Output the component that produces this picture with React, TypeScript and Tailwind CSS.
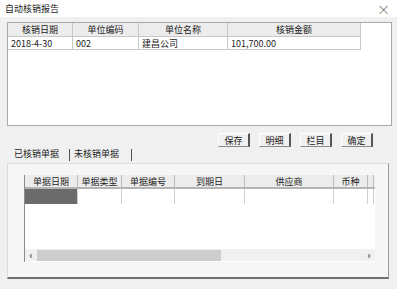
import React from 'react';

const font = { fontFamily: '"Noto Sans CJK SC", "Liberation Sans", sans-serif' };

const topCols = [
  { title: '核销日期', w: 'w-[65px]', value: '2018-4-30' },
  { title: '单位编码', w: 'w-[66px]', value: '002' },
  { title: '单位名称', w: 'w-[89px]', value: '建昌公司' },
  { title: '核销金额', w: 'w-[133px]', value: '101,700.00' },
];

const gridCols = [
  { title: '单据日期', w: 'w-[53px]' },
  { title: '单据类型', w: 'w-[44px]' },
  { title: '单据编号', w: 'w-[53px]' },
  { title: '到期日', w: 'w-[70px]' },
  { title: '供应商', w: 'w-[89px]' },
  { title: '币种', w: 'w-[34px]' },
  { title: '', w: 'w-[6px]' },
];

const buttons = ['保存', '明细', '栏目', '确定'];

export default function App() {
  return (
    <div
      className="w-[397px] h-[289px] overflow-hidden bg-[#f0f0f0] text-[9px] leading-none text-[#222] flex flex-col"
      style={font}
    >
      {/* title bar */}
      <div className="h-[17px] bg-white flex items-center justify-between pl-[5px] pr-[7px] shrink-0">
        <span>自动核销报告</span>
        <span className="text-[13px] font-light text-[#555]">×</span>
      </div>

      {/* upper result box */}
      <div className="ml-[7px] mt-[5px] w-[385px] h-[104px] bg-white border border-[#a9a9a9] shrink-0">
        <div className="flex h-[14px] w-[353px] bg-[#ececec] border-b border-[#c8c8c8]">
          {topCols.map((c) => (
            <div key={c.title} className={`${c.w} border-r border-[#c8c8c8] flex items-center justify-center`}>
              {c.title}
            </div>
          ))}
        </div>
        <div className="flex h-[13px] w-[353px] border-b border-[#c8c8c8]">
          {topCols.map((c) => (
            <div key={c.title} className={`${c.w} border-r border-[#c8c8c8] flex items-center pl-[3px]`}>
              {c.value}
            </div>
          ))}
        </div>
      </div>

      {/* buttons */}
      <div className="flex gap-[9px] pl-[218px] mt-[7px] h-[14px] shrink-0">
        {buttons.map((b) => (
          <div
            key={b}
            className="w-[32px] h-[14px] flex items-center justify-center bg-[#f0f0f0] border-t border-l border-white border-r-2 border-b border-r-[#555] border-b-[#8a8a8a]"
          >
            {b}
          </div>
        ))}
      </div>

      {/* tabs */}
      <div className="flex h-[16px] pl-[14px] shrink-0">
        <span className="pt-[2px]">已核销单据</span>
        <span className="ml-[10px] mt-[2px] w-px h-[12px] bg-[#555]" />
        <span className="ml-[4px] pt-[2px]">未核销单据</span>
        <span className="ml-[12px] mt-[2px] w-px h-[12px] bg-[#555]" />
      </div>

      {/* tab panel */}
      <div className="ml-[7px] w-[382px] h-[116px] bg-[#f6f6f6] border-t border-l border-[#dcdcdc] border-r border-r-[#9a9a9a] border-b-2 border-b-[#707070] pt-[11px] pl-[16px] shrink-0">
        <div className="w-[351px] h-[87px] bg-white border-l border-[#8c8c8c] flex flex-col">
          <div className="flex h-[14px] bg-[#ececec] border-b-2 border-[#b4b4b4] shrink-0">
            {gridCols.map((c, i) => (
              <div key={i} className={`${c.w} border-r border-[#bdbdbd] flex items-center justify-center`}>
                {c.title}
              </div>
            ))}
          </div>
          <div className="flex h-[15px] shrink-0">
            {gridCols.map((c, i) => (
              <div
                key={i}
                className={`${c.w} border-r border-[#cfcfcf] ${i === 0 ? 'bg-[#6b6b6b]' : ''}`}
              />
            ))}
          </div>
          <div className="flex-1" />
          <div className="h-[12px] flex items-center bg-[#f0f0f0] shrink-0 mb-[1px]">
            <span className="w-[12px] text-center text-[9px] font-bold text-[#333]">‹</span>
            <div className="w-[184px] h-[11px] bg-[#cdcdcd]" />
            <div className="flex-1" />
            <span className="w-[12px] text-center text-[9px] font-bold text-[#333]">›</span>
          </div>
        </div>
      </div>
    </div>
  );
}
